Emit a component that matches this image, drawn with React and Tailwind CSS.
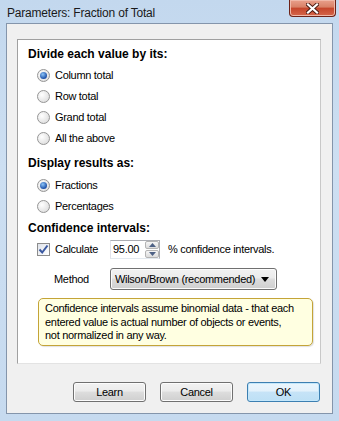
import React from 'react'

const Radio = ({ label, checked }) => {
    return (
        <div className="flex items-center h-[21px] pl-[9px]">
            <span className="w-[13px] h-[13px] rounded-full border border-[#959595] bg-[radial-gradient(circle_at_35%_35%,#ffffff,#d6d6d6)] flex items-center justify-center">
                {checked && <span className="w-[7px] h-[7px] rounded-full bg-[radial-gradient(circle_at_40%_35%,#8cc4f8,#1b4fa8_70%)]" />}
            </span>
            <span className="ps-[5px]">{label}</span>
        </div>
    )
}

const Button = ({ label, primary }) => {
    return (
        <button className={`w-[73px] h-[20px] rounded-[3px] border text-[11px] text-black flex items-center justify-center ${primary ? 'border-[#3c7fb1] bg-[linear-gradient(#eaf6fd_0%,#e3f1fb_45%,#c6e3f7_50%,#bde0f5_100%)] shadow-[inset_0_0_0_1px_#c4e7fb]' : 'border-[#707070] bg-[linear-gradient(#f2f2f2_0%,#ebebeb_45%,#dddddd_50%,#cfcfcf_100%)] shadow-[inset_0_0_0_1px_#fcfcfc]'}`}>
            {label}
        </button>
    )
}

const App = () => {
    return (
        <div className="w-[339px] h-[421px] overflow-hidden bg-[linear-gradient(180deg,#c3d8ee_0%,#cddff2_40%,#c6daef_100%)] font-['Liberation_Sans',Arial,sans-serif] text-[11px] tracking-[-0.3px] text-black">

            {/* title bar */}
            <div className="h-[23px] flex justify-between">
                <span className="ps-[7px] pt-[4px] text-[12px] text-[#1a1a1a] tracking-[-0.2px]">Parameters: Fraction of Total</span>
                <div className="me-[3px] w-[47px] h-[17px] rounded-b-[4px] border border-t-0 border-[#6d2217] bg-[linear-gradient(#e9a08c_0%,#d88066_45%,#c5452b_50%,#d4664a_100%)] shadow-[inset_0_0_0_1px_#f0b8a8] flex items-center justify-center">
                    <svg width="13" height="11" viewBox="0 0 13 11">
                        <path d="M2 1.5 L11 9.5 M11 1.5 L2 9.5" stroke="#4a1a12" strokeWidth="4" strokeLinecap="square" />
                        <path d="M2 1.5 L11 9.5 M11 1.5 L2 9.5" stroke="#ffffff" strokeWidth="2.2" strokeLinecap="square" />
                    </svg>
                </div>
            </div>

            {/* client area */}
            <div className="mx-[6px] h-[391px] border border-[#8495ab] bg-[#f0f0f0] pt-[15px] ps-[10px] pe-[11px]">

                <div className="h-[325px] border border-[#a0a0a0] border-b-[#e3e3e3] border-r-[#c8c8c8] bg-white ps-[10px] pt-[6px]">

                    <div className="h-[16px] flex items-center text-[12px] font-bold tracking-normal">Divide each value by its:</div>
                    <div className="mt-[3px]">
                        <Radio label="Column total" checked />
                        <Radio label="Row total" />
                        <Radio label="Grand total" />
                        <Radio label="All the above" />
                    </div>

                    <div className="mt-[6px] h-[16px] flex items-center text-[12px] font-bold tracking-normal">Display results as:</div>
                    <div className="mt-[4px]">
                        <Radio label="Fractions" checked />
                        <Radio label="Percentages" />
                    </div>

                    <div className="mt-[3px] h-[16px] flex items-center text-[12px] font-bold tracking-normal">Confidence intervals:</div>

                    <div className="mt-[3px] h-[21px] flex items-center ps-[9px]">
                        <span className="w-[13px] h-[13px] border border-[#8c8c8c] bg-[linear-gradient(135deg,#dfe3ea,#ffffff)] flex items-center justify-center">
                            <svg width="11" height="11" viewBox="0 0 11 11">
                                <path d="M1.5 5.5 L4.2 8.5 L9.5 1.5" fill="none" stroke="#3a58a0" strokeWidth="2" />
                            </svg>
                        </span>
                        <span className="ps-[5px] w-[60px]">Calculate</span>
                        <div className="w-[50px] h-[19px] border border-[#abadb3] border-l-[#e2e3ea] border-b-[#e3e9ef] bg-white flex">
                            <span className="flex-1 ps-[2px] leading-[17px]">95.00</span>
                            <div className="w-[14px] flex flex-col gap-[1px]">
                                <div className="flex-1 rounded-[2px] border border-[#b4b4b4] bg-[linear-gradient(#f6f6f6,#dcdcdc)] flex items-center justify-center">
                                    <svg width="7" height="4" viewBox="0 0 7 4"><path d="M0 4 L3.5 0 L7 4 Z" fill="#4d6185" /></svg>
                                </div>
                                <div className="flex-1 rounded-[2px] border border-[#b4b4b4] bg-[linear-gradient(#f6f6f6,#dcdcdc)] flex items-center justify-center">
                                    <svg width="7" height="4" viewBox="0 0 7 4"><path d="M0 0 L3.5 4 L7 0 Z" fill="#4d6185" /></svg>
                                </div>
                            </div>
                        </div>
                        <span className="ps-[8px]">% confidence intervals.</span>
                    </div>

                    <div className="mt-[8px] h-[22px] flex items-center ps-[26px]">
                        <span className="w-[56px]">Method</span>
                        <div className="w-[167px] h-[22px] rounded-[3px] border border-[#707070] bg-[linear-gradient(#f2f2f2_0%,#ebebeb_45%,#dddddd_50%,#cfcfcf_100%)] shadow-[inset_0_0_0_1px_#fcfcfc] flex items-center justify-between ps-[4px] pe-[7px] whitespace-nowrap">
                            <span>Wilson/Brown (recommended)</span>
                            <svg width="8" height="5" viewBox="0 0 8 5"><path d="M0 0 L8 0 L4 5 Z" fill="#000" /></svg>
                        </div>
                    </div>

                    <div className="mt-[8px] ms-[10px] w-[275px] h-[48px] rounded-[5px] border border-[#c4a437] bg-[#ffffe1] shadow-[1px_1px_1px_rgba(0,0,0,0.12)] ps-[6px] pt-[3px] leading-[13.5px] whitespace-nowrap">
                        Confidence intervals assume binomial data - that each<br />
                        entered value is actual number of objects or events,<br />
                        not normalized in any way.
                    </div>
                </div>

                <div className="mt-[18px] flex justify-end gap-[14px] pe-[1px]">
                    <Button label="Learn" />
                    <Button label="Cancel" />
                    <Button label="OK" primary />
                </div>
            </div>
        </div>
    )
}

export default App
